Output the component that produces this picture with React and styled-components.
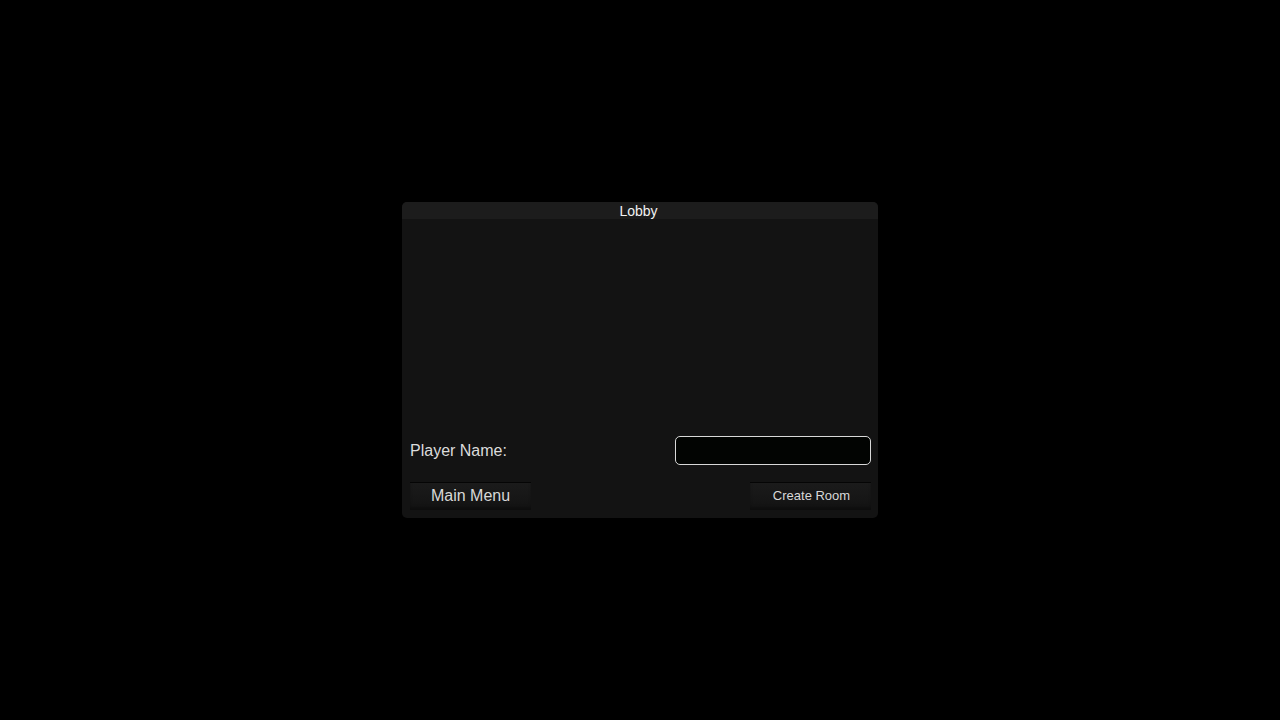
import React from "react";
import styled, { createGlobalStyle } from "styled-components";

const Global = createGlobalStyle`
  html, body { margin: 0; padding: 0; background: #000; }
  body { font-family: "Liberation Sans", Arial, sans-serif; }
  #root { height: 100vh; }
`;

const Screen = styled.div`
  height: 100vh;
  display: flex;
  align-items: center;
  justify-content: center;
`;

const Panel = styled.div`
  width: 476px;
  height: 316px;
  background: #131313;
  border-radius: 5px;
  display: flex;
  flex-direction: column;
  overflow: hidden;
`;

const Header = styled.div`
  height: 17px;
  background: #1c1c1c;
  color: #f2f2f2;
  font-size: 14px;
  line-height: 18px;
  text-align: center;
  padding-right: 3px;
`;

const Body = styled.div`
  flex: 1;
  display: flex;
  flex-direction: column;
  padding: 0 7px 8px 7px;
`;

const RoomList = styled.div`
  flex: 1;
`;

const Row = styled.div`
  display: flex;
  align-items: center;
  justify-content: space-between;
`;

const Label = styled.span`
  color: #dcdcdc;
  font-size: 16px;
  padding-left: 1px;
`;

const NameInput = styled.input`
  width: 196px;
  height: 29px;
  box-sizing: border-box;
  background: #020402;
  border: 1px solid #d8d8d8;
  border-radius: 5px;
  color: #eee;
  outline: none;
  font-family: inherit;
`;

const Actions = styled(Row)`
  margin-top: 17px;
  padding-left: 1px;
`;

const Button = styled.button`
  width: 121px;
  height: 28px;
  box-sizing: border-box;
  border: none;
  border-top: 1px solid #050505;
  background: linear-gradient(#1b1b1b, #161616 60%, #121212);
  box-shadow: inset 0 -3px 3px rgba(0, 0, 0, 0.25);
  color: #d8d8d8;
  font-family: inherit;
  font-size: ${(p) => (p.$small ? "13px" : "16px")};
  padding: 0 0 2px ${(p) => (p.$small ? "2px" : "0")};
  cursor: pointer;
`;

export default function App() {
  return (
    <>
      <Global />
      <Screen>
        <Panel>
          <Header>Lobby</Header>
          <Body>
            <RoomList />
            <Row>
              <Label>Player Name:</Label>
              <NameInput type="text" />
            </Row>
            <Actions>
              <Button>Main Menu</Button>
              <Button $small>Create Room</Button>
            </Actions>
          </Body>
        </Panel>
      </Screen>
    </>
  );
}
